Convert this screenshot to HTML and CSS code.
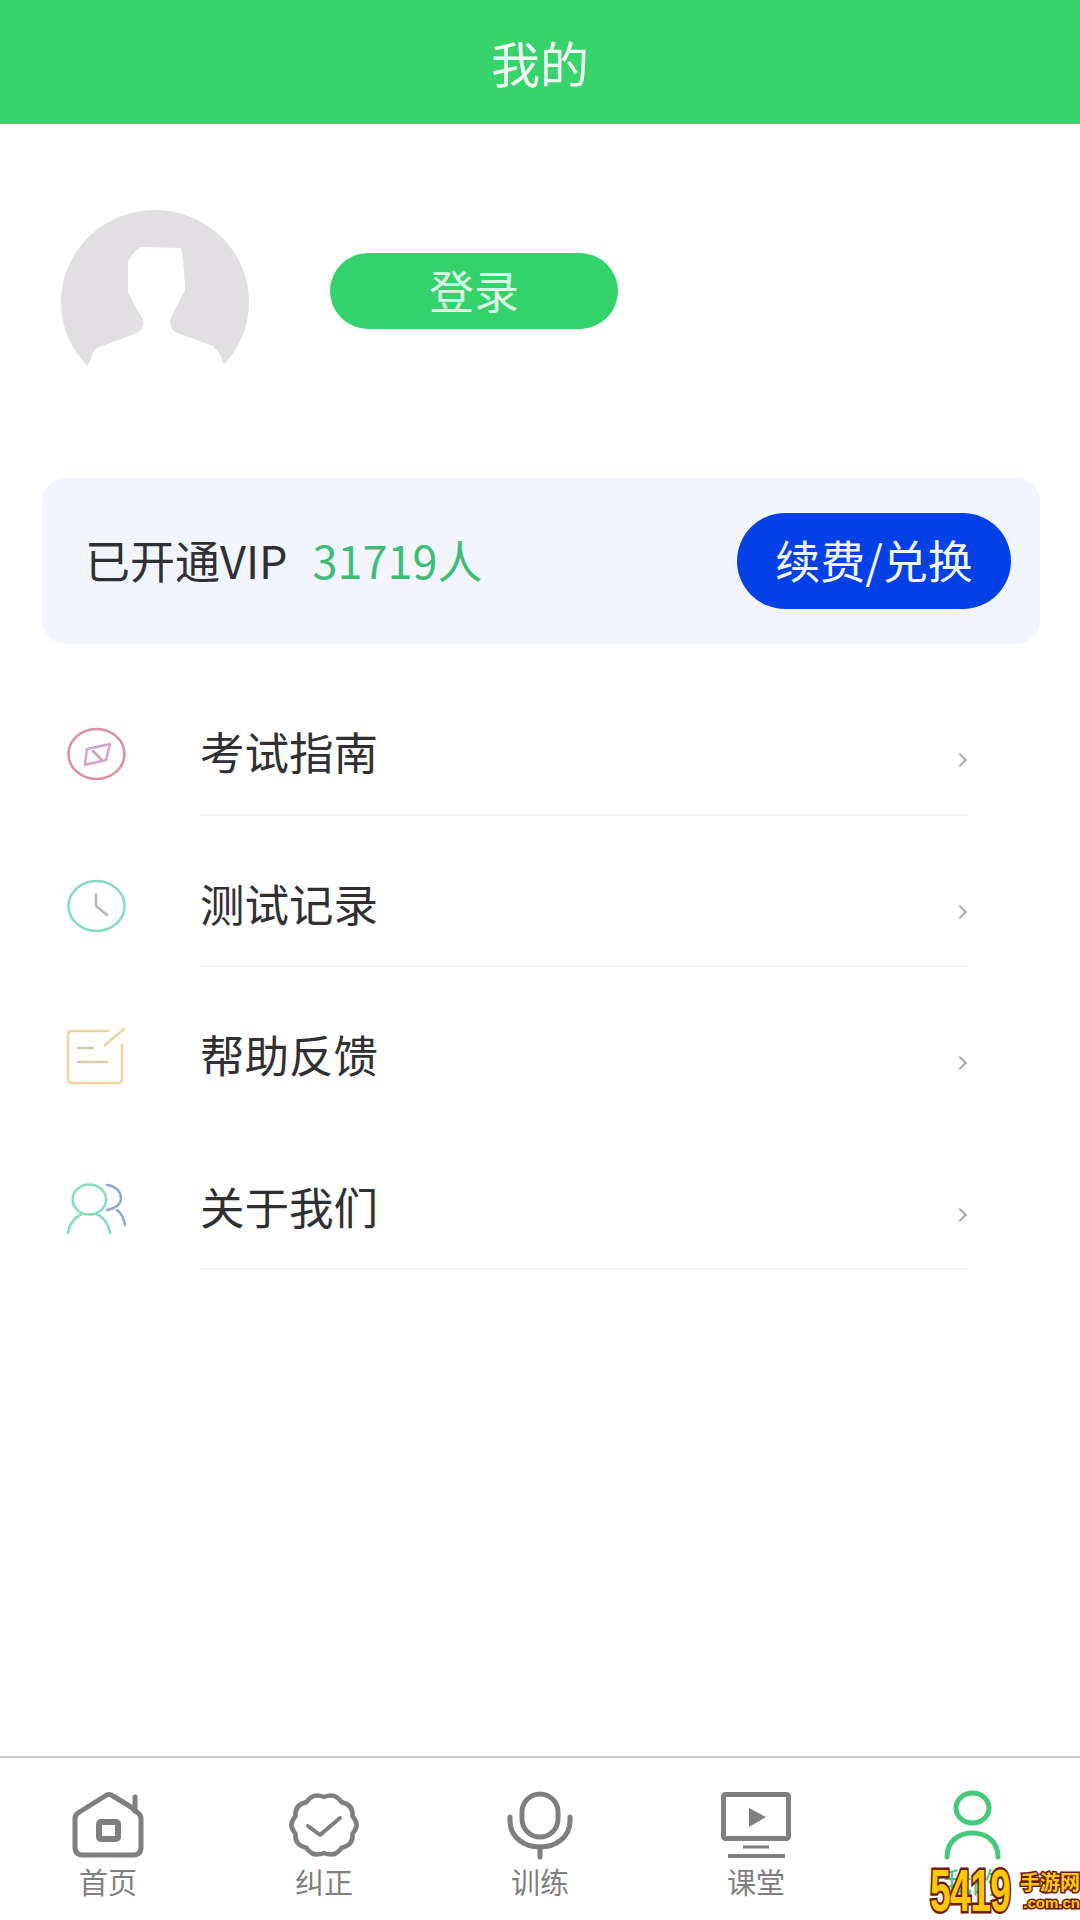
FILE: index.html
```html
<!DOCTYPE html>
<html lang="zh-CN">
<head>
    <meta charset="UTF-8">
    <meta name="viewport" content="width=device-width, initial-scale=1.0">
    <title>我的</title>
    <link rel="stylesheet" href="styles.css">
</head>
<body>
    <div class="page">
        <header class="topbar">我的</header>

        <section class="profile">
            <svg class="avatar" viewBox="60 210 190 160">
                <ellipse cx="155" cy="302" rx="94" ry="92" fill="#e1dfe1"/>
                <path fill="#fff" d="M141 247 L181 248 Q184 262 185 290 L171 317 Q168 327 175 332 L213 346 Q220 352 223 362 L230 376 H80 L90 362 Q92 351 97 348 L137 333 Q145 327 143 320 L128 293 V262 Q132 252 141 247 Z"/>
            </svg>
            <a class="login-btn">登录</a>
        </section>

        <section class="vip-card">
            <div class="vip-text">已开通VIP<span class="vip-count">31719人</span></div>
            <a class="renew-btn">续费/兑换</a>
        </section>

        <ul class="menu">
            <li class="menu-row">
                <svg class="menu-icon" viewBox="0 0 60 60" fill="none" stroke-width="2.5" stroke-linecap="round">
                    <ellipse cx="30.5" cy="30" rx="28" ry="25" stroke="#dd8f9e"/>
                    <path d="M21 25 L44 20 L40 36 L19 41 Z" stroke="#d3a3cc" stroke-linejoin="round"/>
                    <path d="M27 27 L35 35" stroke="#c5a0a8"/>
                </svg>
                <div class="menu-body">
                    <span class="menu-label">考试指南</span>
                    <span class="chevron"></span>
                </div>
            </li>
            <li class="menu-row">
                <svg class="menu-icon" viewBox="0 0 60 60" fill="none" stroke-width="2.5" stroke-linecap="round">
                    <ellipse cx="30.5" cy="30" rx="28" ry="25" stroke="#84dcbc"/>
                    <path d="M30 18 V30 L41 39" stroke="#adb9bd" stroke-linejoin="round"/>
                </svg>
                <div class="menu-body">
                    <span class="menu-label">测试记录</span>
                    <span class="chevron"></span>
                </div>
            </li>
            <li class="menu-row">
                <svg class="menu-icon" viewBox="0 0 60 60" fill="none" stroke-width="2.5" stroke-linecap="round">
                    <path d="M42 4 H6 Q2 4 2 8 V52 Q2 56 6 56 H52 Q56 56 56 52 V18" stroke="#ecd59f"/>
                    <path d="M39 18 L58 2" stroke="#e6d6a2"/>
                    <path d="M12 21 H27 M12 35 H41" stroke="#d3cfa8"/>
                </svg>
                <div class="menu-body no-line">
                    <span class="menu-label">帮助反馈</span>
                    <span class="chevron"></span>
                </div>
            </li>
            <li class="menu-row">
                <svg class="menu-icon" viewBox="0 0 60 60" fill="none" stroke-width="2.5" stroke-linecap="round">
                    <ellipse cx="23.3" cy="20.5" rx="16.7" ry="15" stroke="#86dcb8"/>
                    <path d="M2 54 C3 45 9 38 15 35.5 M31 35.5 C38 38 43 46 44 54" stroke="#86dcb8"/>
                    <path d="M41 6 C50 7 55 13 55 19 C55 26 48 30 41 31 M51 31 C55 34 58 40 59 46" stroke="#8da8d2"/>
                </svg>
                <div class="menu-body">
                    <span class="menu-label">关于我们</span>
                    <span class="chevron"></span>
                </div>
            </li>
        </ul>

        <nav class="tabbar">
            <a class="tab">
                <svg class="tab-icon" viewBox="0 0 80 72" fill="none" stroke="#7f7f7f" stroke-width="5" stroke-linecap="round" stroke-linejoin="round">
                    <path d="M63 18 L45 7 Q41 4 37 7 L10 24 Q7 26 7 30 V58 Q7 66 15 66 H65 Q73 66 73 58 V30 Q73 26 70 24 L63 18"/>
                    <path d="M67 8 V22"/>
                    <rect x="31" y="33" width="19" height="17" rx="2" stroke-width="6"/>
                </svg>
                <span>首页</span>
            </a>
            <a class="tab">
                <svg class="tab-icon" viewBox="0 0 80 72" fill="none" stroke="#7f7f7f" stroke-width="4.5" stroke-linecap="round" stroke-linejoin="round">
                    <path d="M68.5 44.7 Q69.6 56.3 57.6 58.7 Q51.3 68.8 40 64 Q28.7 68.8 22.4 58.7 Q10.4 56.3 11.5 44.7 Q3.4 36 11.5 27.3 Q10.4 15.7 22.4 13.3 Q28.7 3.2 40 8 Q51.3 3.2 57.6 13.3 Q69.6 15.7 68.5 27.3 Q76.6 36 68.5 44.7 Z"/>
                    <path d="M24 37 L36 46 L56 29" stroke-width="4"/>
                </svg>
                <span>纠正</span>
            </a>
            <a class="tab">
                <svg class="tab-icon" viewBox="0 0 80 72" fill="none" stroke="#7f7f7f" stroke-width="5" stroke-linecap="round" stroke-linejoin="round">
                    <rect x="22" y="5" width="36" height="43" rx="18"/>
                    <path d="M10 28 V32 C10 48 24 58 40 58 C56 58 70 48 70 32 V28"/>
                    <path d="M40 58 V68"/>
                </svg>
                <span>训练</span>
            </a>
            <a class="tab">
                <svg class="tab-icon" viewBox="0 0 80 72" fill="none" stroke="#7f7f7f" stroke-width="5" stroke-linejoin="round">
                    <rect x="7.5" y="5.5" width="65" height="44" rx="2"/>
                    <path d="M33 19 L50 28 L33 38 Z" fill="#7f7f7f" stroke="none"/>
                    <path d="M27 58 H53" stroke-width="3"/>
                    <path d="M12 67 H69" stroke-width="4"/>
                </svg>
                <span>课堂</span>
            </a>
            <a class="tab active">
                <svg class="tab-icon" viewBox="0 0 80 72" fill="none" stroke="#45c97a" stroke-width="5" stroke-linecap="round">
                    <ellipse cx="40.5" cy="19" rx="16.5" ry="15"/>
                    <path d="M15 68 C15 52 27 44 40 44 C54 44 66 52 66 68"/>
                </svg>
                <span>我的</span>
            </a>
        </nav>

        <div class="watermark">
            <span class="wm-num">5419</span>
            <div class="wm-side">
                <span class="wm-name">手游网</span>
                <span class="wm-domain">.com.cn</span>
            </div>
        </div>
    </div>
</body>
</html>
```

FILE: styles.css
```css
* {
    margin: 0;
    padding: 0;
    box-sizing: border-box;
}

body {
    font-family: "Noto Sans CJK SC", "Liberation Sans", sans-serif;
    background-color: #fff;
    color: #303033;
}

.page {
    position: relative;
    width: 1080px;
    height: 1920px;
    display: flex;
    flex-direction: column;
    overflow: hidden;
}

.topbar {
    height: 124px;
    padding-bottom: 2px;
    display: flex;
    align-items: center;
    justify-content: center;
    background-color: #36d46b;
    color: #f2fbf5;
    font-size: 49px;
}

.profile {
    height: 354px;
    padding: 86px 0 0 60px;
    display: flex;
    align-items: flex-start;
    gap: 80px;
}

.avatar {
    width: 190px;
    height: 160px;
}

.login-btn {
    width: 288px;
    height: 76px;
    margin-top: 43px;
    padding-bottom: 4px;
    display: flex;
    align-items: center;
    justify-content: center;
    border-radius: 38px;
    background-color: #33d26a;
    color: #ddf7e6;
    font-size: 45px;
}

.vip-card {
    height: 166px;
    margin: 0 40px 0 42px;
    padding: 0 29px 0 43px;
    display: flex;
    align-items: center;
    justify-content: space-between;
    border-radius: 24px;
    background-color: #f2f5fe;
}

.vip-text {
    padding-bottom: 4px;
    font-size: 45px;
    display: flex;
    align-items: center;
}

.vip-count {
    margin-left: 25px;
    color: #3fbd75;
}

.renew-btn {
    width: 274px;
    height: 96px;
    padding-bottom: 4px;
    display: flex;
    align-items: center;
    justify-content: center;
    border-radius: 48px;
    background-color: #0340e6;
    color: #f4f7ff;
    font-size: 45px;
}

.menu {
    list-style: none;
    padding-top: 20px;
}

.menu-row {
    height: 151.5px;
    padding-left: 66px;
    display: flex;
    align-items: center;
}

.menu-icon {
    width: 60px;
    height: 60px;
    margin-top: 29px;
    overflow: visible;
}

.menu-body {
    height: 100%;
    width: 768px;
    margin-left: 74px;
    padding: 24px 0 0 0;
    display: flex;
    align-items: center;
    justify-content: space-between;
    border-bottom: 2px solid #f4f4f4;
}

.no-line {
    border-bottom-color: transparent;
}

.menu-label {
    font-size: 44.5px;
}

.chevron {
    width: 10px;
    height: 10px;
    margin: 19px 3px 0 0;
    border-top: 2px solid #a9a9a9;
    border-right: 2px solid #a9a9a9;
    transform: rotate(45deg);
}

.tabbar {
    margin-top: auto;
    height: 164px;
    padding-top: 31px;
    display: flex;
    border-top: 2px solid #c8c8c8;
}

.tab {
    flex: 1;
    display: flex;
    flex-direction: column;
    align-items: center;
    color: #7f7f7f;
    font-size: 29px;
    line-height: 36px;
}

.tab-icon {
    width: 80px;
    height: 72px;
    margin-bottom: 2px;
}

.tab.active {
    color: #45c97a;
}

/* site stamp sitting on top of the last tab */
.watermark {
    position: absolute;
    right: 0;
    bottom: 4px;
    width: 150px;
    height: 50px;
    display: flex;
    align-items: center;
    font-family: "Liberation Sans", sans-serif;
    font-weight: bold;
    color: #ffc800;
}

.wm-num {
    width: 88px;
    font-size: 60px;
    line-height: 50px;
    letter-spacing: -1px;
    transform: scaleX(0.62);
    transform-origin: left center;
    -webkit-text-stroke: 5px #6a1c0a;
    paint-order: stroke fill;
}

.wm-side {
    display: flex;
    flex-direction: column;
    align-items: flex-end;
    flex: 1;
    line-height: 1;
    -webkit-text-stroke: 3px #6a1c0a;
    paint-order: stroke fill;
}

.wm-name {
    font-family: "Noto Sans CJK SC", sans-serif;
    font-size: 20px;
}

.wm-domain {
    margin-top: 3px;
    font-size: 15px;
}
```
